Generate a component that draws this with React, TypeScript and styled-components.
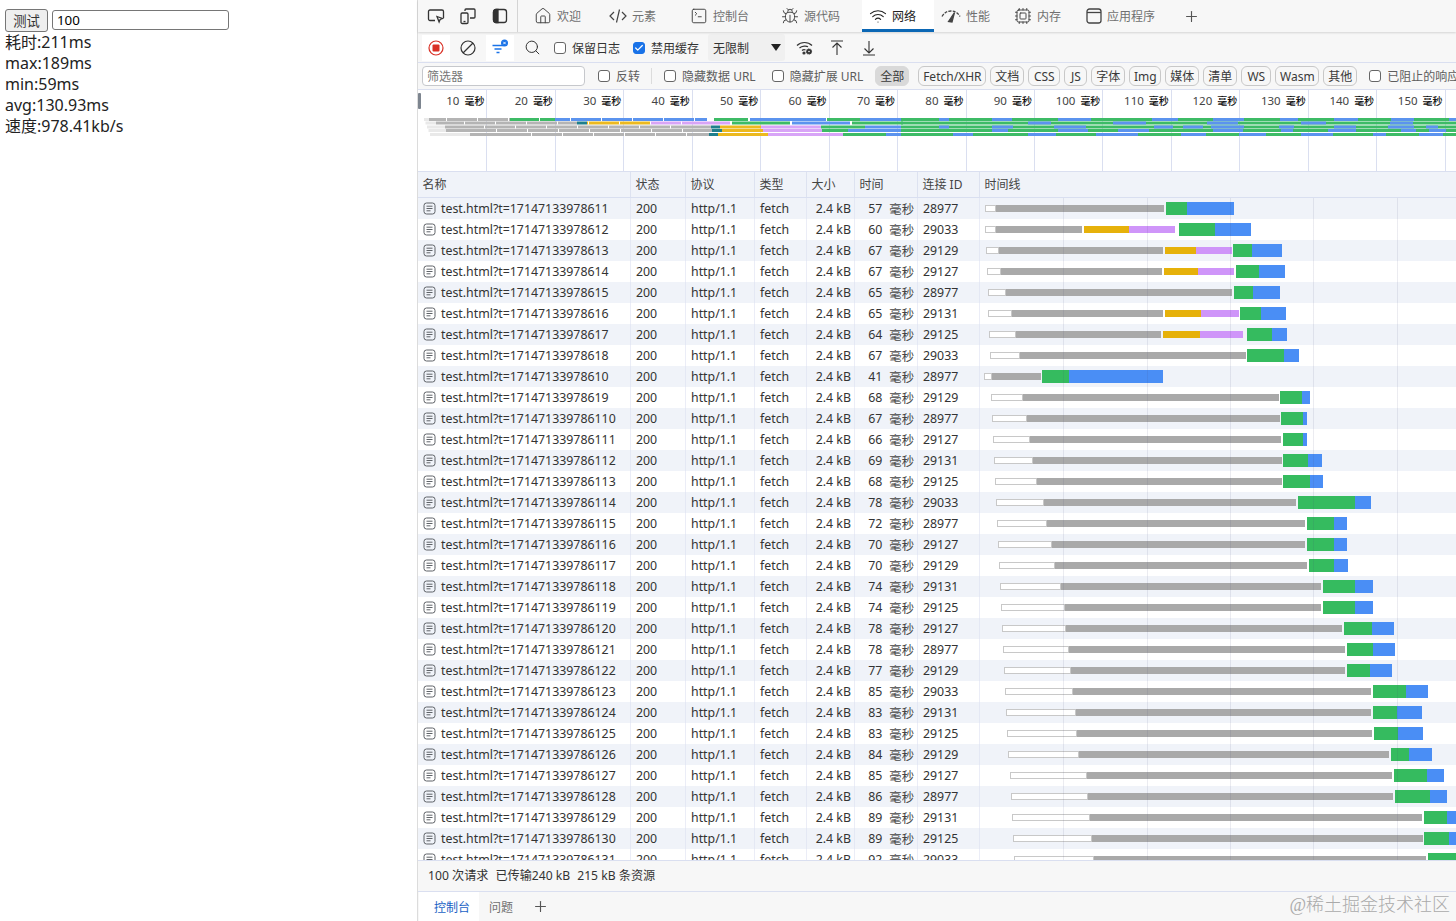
import React from 'react';
import styled, { createGlobalStyle } from 'styled-components';
import { Bug, Check, Cpu, House, Plus, Search, SquareTerminal, Wifi } from 'lucide-react';

const uiFont = `"Noto Sans", "Noto Sans CJK SC", sans-serif`;

const GlobalStyle = createGlobalStyle`
    html, body {
        margin: 0;
        padding: 0;
        background: #fff;
    }
    * {
        box-sizing: border-box;
    }
`;

const Page = styled.div`
    display: flex;
    width: 1456px;
    height: 921px;
    overflow: hidden;
`;

const TestPane = styled.div`
    width: 417px;
    flex: none;
    padding: 9px 5px 0;
    font: 16px/21px ${uiFont};
    color: #222;
`;

const TestControls = styled.div`
    display: flex;
    align-items: center;
    gap: 4px;
    height: 22px;
    margin-bottom: 1px;
`;

const RunButton = styled.button`
    width: 43px;
    height: 23px;
    padding: 0;
    background: #efefef;
    border: 1px solid #767676;
    border-radius: 3px;
    color: #333;
    font: 13.33px ${uiFont};
`;

const CountInput = styled.input`
    width: 177px;
    height: 20px;
    padding: 1px 4px;
    border: 1px solid #767676;
    border-radius: 3px;
    font: 13.33px ${uiFont};
`;

const DevTools = styled.div`
    flex: 1;
    min-width: 0;
    display: flex;
    flex-direction: column;
    position: relative;
    border-left: 1px solid #dcdcdc;
    background: #f7f7f7;
    font: 12px ${uiFont};
    color: #333;
`;

const TabBar = styled.div`
    display: flex;
    align-items: stretch;
    height: 32px;
    flex: none;
    box-shadow: 0 1px 2px rgba(0, 0, 0, 0.14);
    position: relative;
`;

const DockTools = styled.div`
    display: flex;
    align-items: center;
    width: 100px;
    padding-left: 6px;
    gap: 8px;
    border-right: 1px solid #d4d4d4;
    margin-right: 9px;
`;

const IconSlot = styled.span`
    display: flex;
    align-items: center;
    justify-content: center;
    width: 24px;
    height: 24px;
    flex: none;
    color: #333;
`;

const Tab = styled.div<{ $width: number; $active?: boolean }>`
    width: ${(p) => p.$width}px;
    flex: none;
    display: flex;
    align-items: center;
    gap: 5px;
    padding: 0 0 0 7px;
    color: ${(p) => (p.$active ? '#222' : '#707070')};
    background: ${(p) => (p.$active ? '#fff' : 'transparent')};
    border-bottom: ${(p) => (p.$active ? '3px solid #0b67b5' : '0')};
    padding-top: ${(p) => (p.$active ? '3px' : '0')};
    svg {
        color: ${(p) => (p.$active ? '#222' : '#444')};
        flex: none;
    }
`;

const PlusSlot = styled.span<{ $left: number }>`
    display: flex;
    align-items: center;
    margin-left: ${(p) => p.$left}px;
    color: #555;
`;

const ActionBar = styled.div`
    display: flex;
    align-items: center;
    height: 29px;
    flex: none;
    margin-top: 1px;
    padding-left: 4px;
`;

const ActionButton = styled.span<{ $width: number; $white?: boolean }>`
    width: ${(p) => p.$width}px;
    height: 26px;
    flex: none;
    display: flex;
    align-items: center;
    justify-content: center;
    color: #333;
    background: ${(p) => (p.$white ? '#fff' : 'transparent')};
`;

const Box = styled.span<{ $checked?: boolean }>`
    width: 12px;
    height: 12px;
    flex: none;
    display: inline-flex;
    align-items: center;
    justify-content: center;
    border-radius: 3px;
    border: 1px solid ${(p) => (p.$checked ? '#1a73e8' : '#666')};
    background: ${(p) => (p.$checked ? '#1a73e8' : '#fff')};
    color: #fff;
`;

const CheckLabel = styled.label<{ $left: number; $muted?: boolean }>`
    display: flex;
    align-items: center;
    gap: 6px;
    flex: none;
    margin-left: ${(p) => p.$left}px;
    white-space: nowrap;
    color: ${(p) => (p.$muted ? '#5d5d5d' : '#333')};
`;

const ThrottleSelect = styled.div`
    width: 77px;
    height: 27px;
    margin-left: 9px;
    flex: none;
    display: flex;
    align-items: center;
    justify-content: space-between;
    padding: 0 4px 0 5px;
    background: #f0f0f0;
    border-radius: 3px;
`;

const Caret = styled.span`
    width: 0;
    height: 0;
    border-left: 5px solid transparent;
    border-right: 5px solid transparent;
    border-top: 7px solid #222;
`;

const FilterBar = styled.div`
    display: flex;
    align-items: center;
    height: 28px;
    flex: none;
    padding-left: 4px;
    border-top: 1px solid #dadff0;
    border-bottom: 1px solid #dadff0;
    white-space: nowrap;
    overflow: hidden;
`;

const FilterInput = styled.div`
    width: 163px;
    height: 20px;
    flex: none;
    padding-left: 4px;
    line-height: 19px;
    border: 1px solid #c6c8cc;
    border-radius: 4px;
    background: #fff;
    color: #777;
`;

const BarDivider = styled.span`
    width: 1px;
    height: 16px;
    margin-left: 11px;
    flex: none;
    background: #dcdcdc;
`;

const ChipRow = styled.div`
    display: flex;
    gap: 4px;
    margin-left: 9px;
    flex: none;
`;

const Chip = styled.span<{ $active?: boolean; $width: number }>`
    width: ${(p) => p.$width}px;
    height: 20px;
    flex: none;
    display: flex;
    align-items: center;
    justify-content: center;
    border-radius: 6px;
    border: 1px solid ${(p) => (p.$active ? '#d9d9d9' : '#c8c8c8')};
    background: ${(p) => (p.$active ? '#d9d9d9' : 'transparent')};
    color: #3a3a3a;
`;

const ActiveChipSlot = styled.span`
    margin-left: 12px;
    flex: none;
`;

const Overview = styled.div`
    position: relative;
    height: 82px;
    flex: none;
    display: flex;
    padding-left: 1px;
    background: #fff;
    border-bottom: 1px solid #dadff0;
    overflow: hidden;
`;

const OverviewTick = styled.div`
    width: 68.45px;
    flex: none;
    display: flex;
    justify-content: flex-end;
    gap: 5px;
    padding: 3px 2px 0 0;
    font-size: 11.5px;
    line-height: 16px;
    border-right: 1px solid #dadff0;
    color: #444;
`;

const TickUnit = styled.span`
    font-size: 10px;
    font-weight: 500;
    color: #111;
`;

const OverviewChart = styled.svg`
    position: absolute;
    left: 0;
    top: 0;
`;

const OverviewHandle = styled.span`
    position: absolute;
    left: 0;
    top: 3px;
    width: 3px;
    height: 16px;
    background: #7d858f;
    border-radius: 1px;
`;

const Table = styled.div`
    flex: 1;
    min-height: 0;
    display: flex;
    flex-direction: column;
    background: #fff;
    overflow: hidden;
`;

const columns = '213px 55px 69px 52px 48px 63px 62px 1fr';

const HeaderRow = styled.div`
    display: grid;
    grid-template-columns: ${columns};
    height: 26px;
    flex: none;
    background: #f0f3f9;
    border-bottom: 1px solid #d9dff0;
`;

const HeaderCell = styled.div`
    display: flex;
    align-items: center;
    padding: 0 0 2px 4.5px;
    border-right: 1px solid #dde2f0;
    color: #444;
    &:last-child {
        border-right: 0;
    }
`;

const RowList = styled.div`
    position: relative;
    flex: 1;
    min-height: 0;
    overflow: hidden;
    font-size: 12.35px;
`;

const GridLines = styled.div`
    position: absolute;
    top: 0;
    bottom: 0;
    left: 562.5px;
    right: 0;
    pointer-events: none;
    background: repeating-linear-gradient(
        90deg,
        transparent 0,
        transparent 82.3px,
        rgba(60, 64, 110, 0.1) 82.3px,
        rgba(60, 64, 110, 0.1) 83.3px
    );
`;

const Row = styled.div<{ $striped: boolean }>`
    display: grid;
    grid-template-columns: ${columns};
    height: 21px;
    background: ${(p) => (p.$striped ? '#f0f3f9' : '#fff')};
`;

const Cell = styled.div<{ $right?: boolean }>`
    display: flex;
    align-items: center;
    justify-content: ${(p) => (p.$right ? 'flex-end' : 'flex-start')};
    padding-left: 5px;
    padding-right: ${(p) => (p.$right ? 3 : 0)}px;
    border-right: 1px solid rgba(218, 223, 240, 0.55);
    color: #333;
    white-space: nowrap;
    overflow: hidden;
`;

const NameCell = styled(Cell)`
    gap: 5px;
`;

const DocIcon = styled.svg`
    flex: none;
    color: #5f6368;
`;

const TimeCell = styled(Cell)`
    gap: 7px;
    padding-right: 3px;
`;

const TimeUnit = styled.span`
    color: #444;
`;

const Waterfall = styled.div`
    display: flex;
    align-items: center;
    min-width: 0;
    overflow: hidden;
`;

const segmentStyles = {
    idle: 'height: 7px; background: #fff; border: 1px solid #c8c8c8;',
    wait: 'height: 7px; background: #a9a9a9;',
    queue: 'height: 7px; background: #e6b10a;',
    connect: 'height: 7px; background: #cf95f9;',
    ttfb: 'height: 13px; background: #35bb5f;',
    download: 'height: 13px; background: #4a8ef5;',
};

const Segment = styled.span<{ $kind: keyof typeof segmentStyles }>`
    flex: none;
    ${(p) => segmentStyles[p.$kind]}
`;

const Summary = styled.div`
    height: 32px;
    flex: none;
    display: flex;
    align-items: center;
    gap: 7px;
    padding: 0 0 2px 10px;
    border-top: 1px solid #dadff0;
    border-bottom: 1px solid #dadff0;
    font-size: 12.15px;
    color: #333;
`;

const DrawerTabs = styled.div`
    height: 29px;
    flex: none;
    display: flex;
    align-items: stretch;
    padding-left: 1px;
`;

const DrawerTab = styled.div<{ $active?: boolean }>`
    display: flex;
    align-items: center;
    flex: none;
    white-space: nowrap;
    padding: 0 10px 0 ${(p) => (p.$active ? '15px' : '10px')};
    width: ${(p) => (p.$active ? '60px' : 'auto')};
    background: ${(p) => (p.$active ? '#fff' : 'transparent')};
    color: ${(p) => (p.$active ? '#1a62c5' : '#707070')};
`;

const Watermark = styled.div`
    position: absolute;
    right: 6px;
    bottom: 5px;
    font: 300 18px "Liberation Serif", "Noto Sans CJK SC", serif;
    color: #aaa;
`;

const stats = ['耗时:211ms', 'max:189ms', 'min:59ms', 'avg:130.93ms', '速度:978.41kb/s'];

const chips = [
    ['Fetch/XHR', 68],
    ['文档', 34],
    ['CSS', 32],
    ['JS', 23],
    ['字体', 34],
    ['Img', 32],
    ['媒体', 34],
    ['清单', 34],
    ['WS', 30],
    ['Wasm', 44],
    ['其他', 34],
] as const;

const tableHeaders = ['名称', '状态', '协议', '类型', '大小', '时间', '连接 ID', '时间线'];

// [idle start, wait start, wait end, green start, blue start, end, orange start, orange end, purple end]
const requests: { suffix: string; ms: number; id: number; bar: number[] }[] = [
    { suffix: '8611', ms: 57, id: 28977, bar: [985, 996, 1164, 1166, 1187, 1234] },
    { suffix: '8612', ms: 60, id: 29033, bar: [985, 996, 1082, 1179, 1215, 1251, 1084, 1129, 1175] },
    { suffix: '8613', ms: 67, id: 29129, bar: [986, 999, 1163, 1233, 1252, 1282, 1165, 1196, 1232] },
    { suffix: '8614', ms: 67, id: 29127, bar: [987, 1001, 1162, 1236, 1259, 1285, 1164, 1198, 1234] },
    { suffix: '8615', ms: 65, id: 28977, bar: [988, 1006, 1232, 1234, 1253, 1280] },
    { suffix: '8616', ms: 65, id: 29131, bar: [988, 1012, 1163, 1240, 1261, 1286, 1165, 1201, 1239] },
    { suffix: '8617', ms: 64, id: 29125, bar: [989, 1016, 1161, 1247, 1272, 1287, 1163, 1200, 1243] },
    { suffix: '8618', ms: 67, id: 29033, bar: [990, 1020, 1246, 1247, 1284, 1299] },
    { suffix: '8610', ms: 41, id: 28977, bar: [984, 992, 1041, 1042, 1069, 1163] },
    { suffix: '8619', ms: 68, id: 29129, bar: [991, 1023, 1279, 1280, 1302, 1310] },
    { suffix: '86110', ms: 67, id: 28977, bar: [992, 1027, 1280, 1281, 1303, 1307] },
    { suffix: '86111', ms: 66, id: 29127, bar: [993, 1030, 1281, 1283, 1303, 1307] },
    { suffix: '86112', ms: 69, id: 29131, bar: [994, 1033, 1282, 1283, 1308, 1322] },
    { suffix: '86113', ms: 68, id: 29125, bar: [995, 1037, 1282, 1283, 1310, 1323] },
    { suffix: '86114', ms: 78, id: 29033, bar: [996, 1044, 1296, 1298, 1355, 1371] },
    { suffix: '86115', ms: 72, id: 28977, bar: [997, 1047, 1305, 1307, 1334, 1347] },
    { suffix: '86116', ms: 70, id: 29127, bar: [998, 1052, 1305, 1307, 1334, 1347] },
    { suffix: '86117', ms: 70, id: 29129, bar: [999, 1055, 1307, 1309, 1334, 1348] },
    { suffix: '86118', ms: 74, id: 29131, bar: [1000, 1061, 1321, 1323, 1355, 1373] },
    { suffix: '86119', ms: 74, id: 29125, bar: [1001, 1065, 1321, 1323, 1355, 1373] },
    { suffix: '86120', ms: 78, id: 29127, bar: [1002, 1066, 1342, 1344, 1372, 1394] },
    { suffix: '86121', ms: 78, id: 28977, bar: [1003, 1069, 1345, 1347, 1373, 1395] },
    { suffix: '86122', ms: 77, id: 29129, bar: [1004, 1071, 1345, 1347, 1370, 1392] },
    { suffix: '86123', ms: 85, id: 29033, bar: [1005, 1073, 1371, 1373, 1406, 1428] },
    { suffix: '86124', ms: 83, id: 29131, bar: [1006, 1076, 1371, 1373, 1397, 1422] },
    { suffix: '86125', ms: 83, id: 29125, bar: [1007, 1077, 1372, 1374, 1398, 1423] },
    { suffix: '86126', ms: 84, id: 29129, bar: [1008, 1079, 1389, 1391, 1409, 1432] },
    { suffix: '86127', ms: 85, id: 29127, bar: [1010, 1087, 1392, 1394, 1427, 1444] },
    { suffix: '86128', ms: 86, id: 28977, bar: [1011, 1088, 1393, 1395, 1430, 1447] },
    { suffix: '86129', ms: 89, id: 29131, bar: [1012, 1090, 1422, 1424, 1447, 1470] },
    { suffix: '86130', ms: 89, id: 29125, bar: [1013, 1092, 1423, 1424, 1449, 1470] },
    { suffix: '86131', ms: 92, id: 29033, bar: [1014, 1094, 1426, 1428, 1470, 1480] },
];

const barSegments = (bar: number[]) => {
    const [idle, wait, waitEnd, green, blue, end, orange, orangeEnd, purpleEnd] = bar;
    const parts: [keyof typeof segmentStyles, number, number][] = [
        ['idle', idle, wait],
        ['wait', wait, waitEnd],
    ];
    if (orange) {
        parts.push(['queue', orange, orangeEnd], ['connect', orangeEnd, purpleEnd]);
    }
    parts.push(['ttfb', green, blue], ['download', blue, end]);
    return parts;
};

const chartGrey = '#b4b4b4';
const chartGreen = '#3dbb66';
const chartBlue = '#5b93ee';
const chartTeal = '#1f7f8c';
const chartOrange = '#ecb91f';
const chartPurple = '#d8a4f7';

const chartRows: { y: number; start: number; parts: [number, number, string][]; blue: [number, number][] }[] = [
    {
        y: 118,
        start: 429,
        parts: [
            [429, 510, chartGrey],
            [510, 555, chartGreen],
            [555, 707, chartBlue],
            [714, 748, chartGreen],
            [750, 826, chartBlue],
            [827, 860, chartGreen],
            [860, 901, chartBlue],
        ],
        blue: [[939, 949], [992, 1012], [1058, 1091], [1152, 1178], [1213, 1244], [1280, 1298], [1334, 1358], [1391, 1414], [1449, 1456]],
    },
    {
        y: 121.5,
        start: 436,
        parts: [
            [436, 577, chartGrey],
            [577, 587, chartTeal],
            [587, 650, chartOrange],
            [650, 730, chartPurple],
            [732, 790, chartGreen],
            [792, 850, chartBlue],
            [852, 903, chartGreen],
        ],
        blue: [[1028, 1051], [1113, 1146], [1207, 1238], [1301, 1326], [1390, 1413]],
    },
    {
        y: 125.5,
        start: 445,
        parts: [
            [445, 711, chartGrey],
            [711, 720, chartTeal],
            [720, 761, chartOrange],
            [761, 821, chartPurple],
            [821, 865, chartGreen],
            [865, 901, chartBlue],
        ],
        blue: [[939, 949], [992, 1013], [1054, 1086], [1154, 1173], [1183, 1203], [1211, 1244], [1279, 1294], [1334, 1356], [1388, 1414], [1426, 1438]],
    },
    {
        y: 129,
        start: 446,
        parts: [
            [446, 712, chartGrey],
            [712, 722, chartTeal],
            [722, 763, chartOrange],
            [763, 822, chartPurple],
            [822, 848, chartGreen],
            [848, 905, chartBlue],
        ],
        blue: [[992, 1008], [1058, 1088], [1118, 1149], [1213, 1243], [1281, 1293], [1328, 1356], [1401, 1416], [1429, 1446]],
    },
    {
        y: 133,
        start: 470,
        parts: [
            [470, 709, chartGrey],
            [709, 718, chartTeal],
            [718, 768, chartOrange],
            [768, 843, chartPurple],
            [843, 886, chartGreen],
            [886, 906, chartBlue],
        ],
        blue: [[953, 973], [1028, 1056], [1096, 1138], [1181, 1206], [1239, 1266], [1301, 1333], [1373, 1386], [1419, 1443]],
    },
];

function OverviewBars() {
    return (
        <OverviewChart width={1038} height={81} viewBox="418 90 1038 81">
            {chartRows.map((row, r) => (
                <g key={row.y}>
                    <rect x={424 + r * 1.5} y={row.y} width={row.start - 424 - r * 1.5} height={3} fill="#e9e9e9" />
                    {row.parts.map(([a, b, fill]) => (
                        <rect key={a} x={a} y={row.y} width={b - a} height={3} fill={fill} />
                    ))}
                    <rect x={901} y={row.y} width={555} height={3} fill={chartGreen} />
                    {row.blue.map(([a, b]) => (
                        <rect key={a} x={a} y={row.y} width={b - a} height={3} fill={chartBlue} />
                    ))}
                    {Array.from({ length: 9 }, (_, i) => (
                        <rect
                            key={i}
                            x={row.start + 17 + r * 11 + i * 31}
                            y={row.y}
                            width={1}
                            height={3}
                            fill="#fff"
                            opacity={row.start + 17 + r * 11 + i * 31 < 700 ? 1 : 0}
                        />
                    ))}
                </g>
            ))}
        </OverviewChart>
    );
}

function DocGlyph() {
    return (
        <DocIcon width="13" height="13" viewBox="0 0 13 13" fill="none" stroke="currentColor">
            <rect x="1" y="1" width="11" height="11" rx="2.5" />
            <path d="M3.5 4.2h6M3.5 6.5h6M3.5 8.8h4" />
        </DocIcon>
    );
}

function InspectIcon() {
    return (
        <svg width="18" height="18" viewBox="0 0 18 18" fill="none" stroke="currentColor" strokeWidth="1.3">
            <path d="M8 13.5H3a1.5 1.5 0 0 1-1.5-1.5V4.5A1.5 1.5 0 0 1 3 3h12a1.5 1.5 0 0 1 1.5 1.5V11" />
            <path d="M10 9.5l5.5 2-2.4 1-1 2.5z" />
        </svg>
    );
}

function DeviceIcon() {
    return (
        <svg width="18" height="18" viewBox="0 0 18 18" fill="none" stroke="currentColor" strokeWidth="1.3">
            <path d="M6 4V3a1 1 0 0 1 1-1h8a1 1 0 0 1 1 1v7a1 1 0 0 1-1 1h-4" />
            <rect x="2" y="6" width="7" height="10.5" rx="1.2" />
            <path d="M4.5 14.5h2" />
        </svg>
    );
}

function DockIcon() {
    return (
        <svg width="18" height="18" viewBox="0 0 18 18" fill="none" stroke="currentColor" strokeWidth="1.3">
            <rect x="2.5" y="2.5" width="13" height="13" rx="2.5" />
            <path d="M2.5 5a2.5 2.5 0 0 1 2.5-2.500h2v13H5A2.5 2.5 0 0 1 2.500 13z" fill="currentColor" />
        </svg>
    );
}

function CodeTabIcon() {
    return (
        <svg width="18" height="16" viewBox="0 0 18 16" fill="none" stroke="currentColor" strokeWidth="1.2">
            <path d="M5 4L1 8l4 4M13 4l4 4-4 4M10.500 1.500l-3 13" />
        </svg>
    );
}

function GaugeTabIcon() {
    return (
        <svg width="20" height="16" viewBox="0 0 20 16" fill="none" stroke="currentColor" strokeWidth="1.3">
            <path d="M1 8.500C3 5 6 3 10 3s7 2 9 5.500" strokeDasharray="3 1.200" />
            <path d="M7.500 13.500l6-9-2.500 9.500z" fill="currentColor" />
        </svg>
    );
}

function AppTabIcon() {
    return (
        <svg width="16" height="16" viewBox="0 0 16 16" fill="none" stroke="currentColor" strokeWidth="1.3">
            <rect x="1" y="1" width="14" height="14" rx="2.500" />
            <path d="M1 4.500h14" />
        </svg>
    );
}

function RecordIcon() {
    return (
        <svg width="16" height="16" viewBox="0 0 16 16">
            <circle cx="8" cy="8" r="7" fill="none" stroke="#d93025" strokeWidth="1.2" />
            <rect x="4.500" y="4.500" width="7" height="7" rx="1" fill="#d93025" />
        </svg>
    );
}

function ClearIcon() {
    return (
        <svg width="16" height="16" viewBox="0 0 16 16" fill="none" stroke="#333" strokeWidth="1.2">
            <circle cx="8" cy="8" r="7" />
            <path d="M3 13L13 3" />
        </svg>
    );
}

function FilterIcon() {
    return (
        <svg width="18" height="18" viewBox="0 0 18 18" fill="none" stroke="#1a73e8" strokeWidth="1.3">
            <path d="M1.500 6.500h11M3.500 10h7M5.500 13.500h3" />
            <circle cx="13.500" cy="4" r="3.500" fill="#1a73e8" stroke="none" />
            <path d="M12.300 2.800l2.400 2.400M14.700 2.800l-2.400 2.400" stroke="#fff" strokeWidth="0.9" />
        </svg>
    );
}

function WifiGearIcon() {
    return (
        <svg width="18" height="16" viewBox="0 0 18 16" fill="none" stroke="#333" strokeWidth="1.2">
            <path d="M1 5.500C5 1.500 12 1.500 16 5.500M3.500 8C6 5.700 10.500 5.700 12 6.800M6 10.500c1-.9 2.500-1.100 3.500-.5" />
            <circle cx="8" cy="13" r="1" fill="#333" />
            <circle cx="13" cy="11.500" r="2.500" fill="#333" strokeDasharray="1 .5" />
            <circle cx="13" cy="11.500" r="0.800" fill="#fff" stroke="none" />
        </svg>
    );
}

function UploadIcon() {
    return (
        <svg width="14" height="16" viewBox="0 0 14 16" fill="none" stroke="#333" strokeWidth="1.1">
            <path d="M1 1h12M7 3v12M2.500 7.500L7 3l4.500 4.500" />
        </svg>
    );
}

function DownloadIcon() {
    return (
        <svg width="14" height="16" viewBox="0 0 14 16" fill="none" stroke="#333" strokeWidth="1.1">
            <path d="M1 15h12M7 1v12M2.500 8.500L7 13l4.500-4.500" />
        </svg>
    );
}

export default function App(): React.JSX.Element {
    return (
        <Page>
            <GlobalStyle />
            <TestPane>
                <TestControls>
                    <RunButton>测试</RunButton>
                    <CountInput defaultValue="100" />
                </TestControls>
                {stats.map((line) => (
                    <div key={line}>{line}</div>
                ))}
            </TestPane>

            <DevTools>
                <TabBar>
                    <DockTools>
                        <IconSlot><InspectIcon /></IconSlot>
                        <IconSlot><DeviceIcon /></IconSlot>
                        <IconSlot><DockIcon /></IconSlot>
                    </DockTools>
                    <Tab $width={75}><House size={18} strokeWidth={1.3} />欢迎</Tab>
                    <Tab $width={81}><CodeTabIcon />元素</Tab>
                    <Tab $width={91}><SquareTerminal size={18} strokeWidth={1.3} />控制台</Tab>
                    <Tab $width={88}><Bug size={18} strokeWidth={1.3} />源代码</Tab>
                    <Tab $width={72} $active><Wifi size={18} strokeWidth={1.5} />网络</Tab>
                    <Tab $width={73}><GaugeTabIcon />性能</Tab>
                    <Tab $width={72}><Cpu size={18} strokeWidth={1.3} />内存</Tab>
                    <Tab $width={97}><AppTabIcon />应用程序</Tab>
                    <PlusSlot $left={7}><Plus size={17} strokeWidth={1.6} /></PlusSlot>
                </TabBar>

                <ActionBar>
                    <ActionButton $width={28} $white><RecordIcon /></ActionButton>
                    <ActionButton $width={36}><ClearIcon /></ActionButton>
                    <ActionButton $width={28} $white><FilterIcon /></ActionButton>
                    <ActionButton $width={36}><Search size={17} strokeWidth={1.4} /></ActionButton>
                    <CheckLabel $left={4}><Box />保留日志</CheckLabel>
                    <CheckLabel $left={13}><Box $checked><Check size={10} strokeWidth={3} /></Box>禁用缓存</CheckLabel>
                    <ThrottleSelect>无限制<Caret /></ThrottleSelect>
                    <ActionButton $width={40}><WifiGearIcon /></ActionButton>
                    <ActionButton $width={24}><UploadIcon /></ActionButton>
                    <ActionButton $width={40}><DownloadIcon /></ActionButton>
                </ActionBar>

                <FilterBar>
                    <FilterInput>筛选器</FilterInput>
                    <CheckLabel $left={13} $muted><Box />反转</CheckLabel>
                    <BarDivider />
                    <CheckLabel $left={12} $muted><Box />隐藏数据 URL</CheckLabel>
                    <CheckLabel $left={16} $muted><Box />隐藏扩展 URL</CheckLabel>
                    <ActiveChipSlot><Chip $active $width={34}>全部</Chip></ActiveChipSlot>
                    <ChipRow>
                        {chips.map(([label, width]) => (
                            <Chip key={label} $width={width}>{label}</Chip>
                        ))}
                    </ChipRow>
                    <CheckLabel $left={12} $muted><Box />已阻止的响应 Cookie</CheckLabel>
                </FilterBar>

                <Overview>
                    {Array.from({ length: 16 }, (_, i) => (
                        <OverviewTick key={i}>
                            {i < 15 && <span>{(i + 1) * 10}</span>}
                            {i < 15 && <TickUnit>毫秒</TickUnit>}
                        </OverviewTick>
                    ))}
                    <OverviewBars />
                    <OverviewHandle />
                </Overview>

                <Table>
                    <HeaderRow>
                        {tableHeaders.map((title) => (
                            <HeaderCell key={title}>{title}</HeaderCell>
                        ))}
                    </HeaderRow>
                    <RowList>
                        {requests.map((req, i) => (
                            <Row key={req.suffix} $striped={i % 2 === 0}>
                                <NameCell>
                                    <DocGlyph />
                                    {'test.html?t=1714713397' + req.suffix}
                                </NameCell>
                                <Cell>200</Cell>
                                <Cell>http/1.1</Cell>
                                <Cell>fetch</Cell>
                                <Cell $right>2.4 kB</Cell>
                                <TimeCell $right>
                                    {req.ms}
                                    <TimeUnit>毫秒</TimeUnit>
                                </TimeCell>
                                <Cell>{req.id}</Cell>
                                <Waterfall>
                                    {barSegments(req.bar).map(([kind, from, to], n, all) => (
                                        <Segment
                                            key={kind}
                                            $kind={kind}
                                            style={{
                                                marginLeft: from - (n === 0 ? 980 : all[n - 1][2]),
                                                width: to - from,
                                            }}
                                        />
                                    ))}
                                </Waterfall>
                            </Row>
                        ))}
                        <GridLines />
                    </RowList>
                </Table>

                <Summary>
                    <span>100 次请求</span>
                    <span>已传输240 kB</span>
                    <span>215 kB 条资源</span>
                </Summary>

                <DrawerTabs>
                    <DrawerTab $active>控制台</DrawerTab>
                    <DrawerTab>问题</DrawerTab>
                    <PlusSlot $left={9}><Plus size={17} strokeWidth={1.6} /></PlusSlot>
                </DrawerTabs>

                <Watermark>@稀土掘金技术社区</Watermark>
            </DevTools>
        </Page>
    );
}
